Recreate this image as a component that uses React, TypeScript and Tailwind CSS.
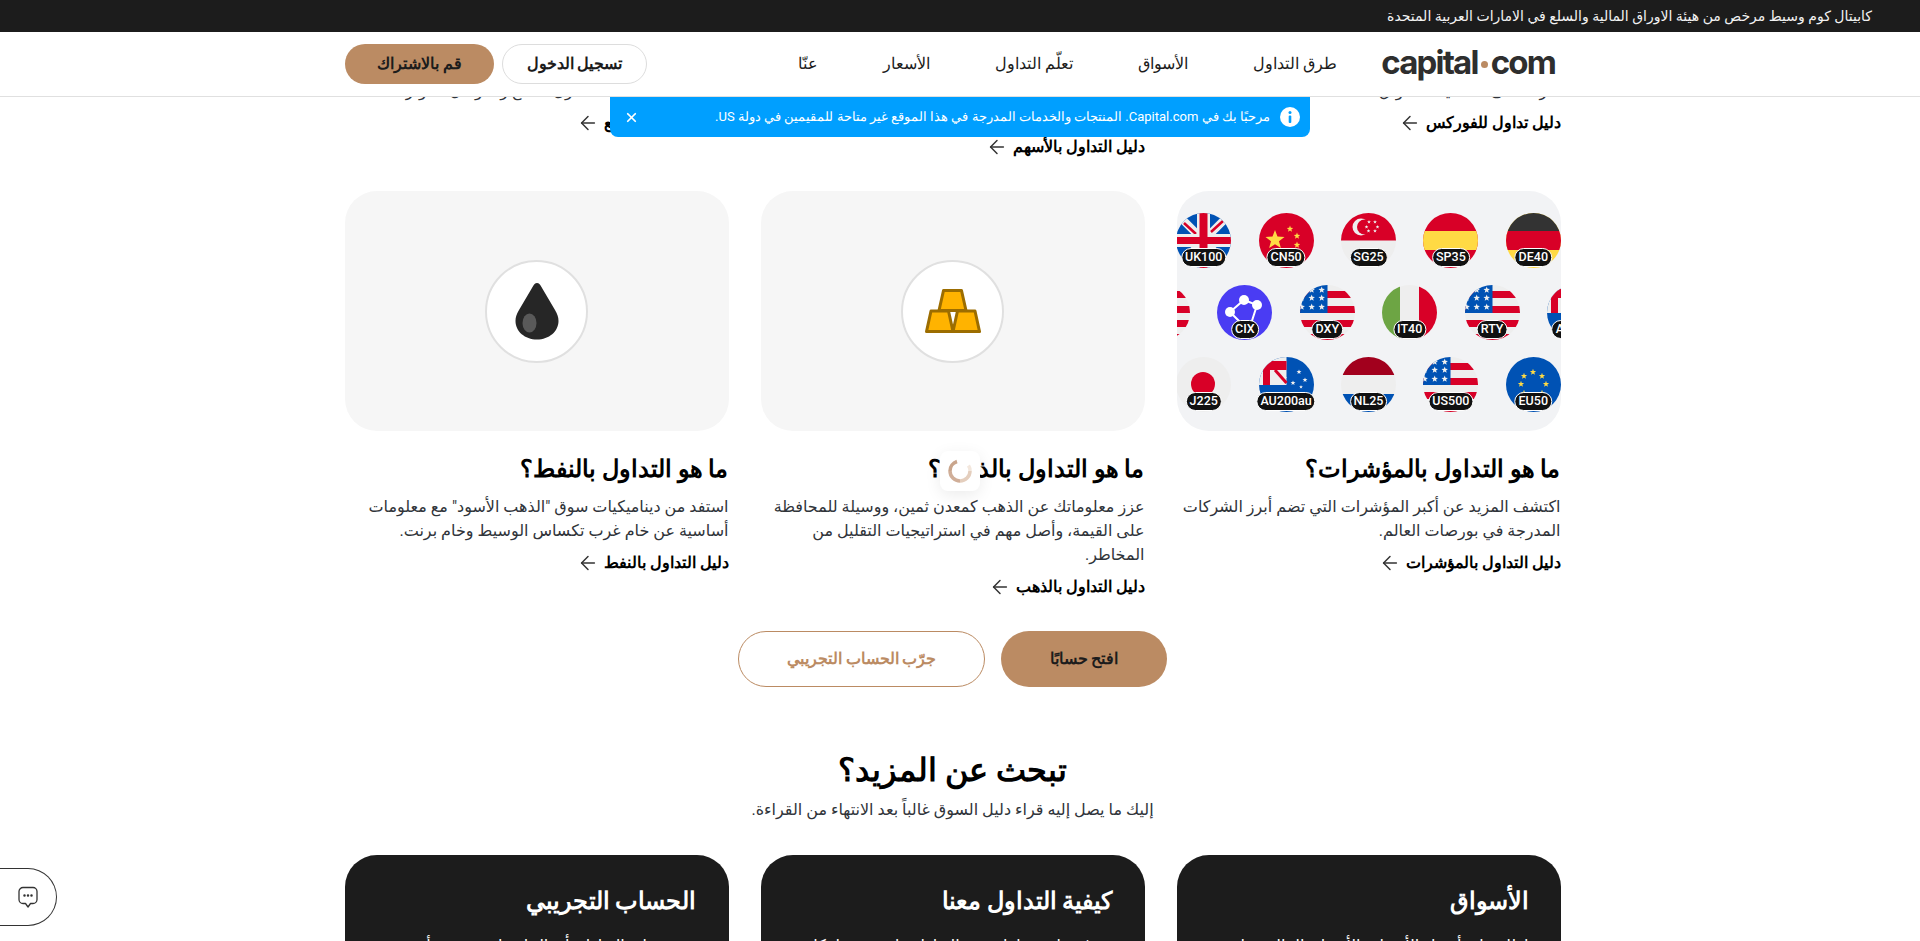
import type { ReactNode, JSX } from "react";
import { ArrowLeft, X } from "lucide-react";

const R = "#d80027", B = "#0052b4", Y = "#ffda44", G = "#eeeeee";

function starPoints(cx: number, cy: number, r: number) {
  const pts: string[] = [];
  for (let i = 0; i < 10; i++) {
    const rad = i % 2 === 0 ? r : r * 0.42;
    const a = -Math.PI / 2 + (i * Math.PI) / 5;
    pts.push(`${(cx + rad * Math.cos(a)).toFixed(2)},${(cy + rad * Math.sin(a)).toFixed(2)}`);
  }
  return pts.join(" ");
}
const Star = ({ x, y, r, fill = "#eee" }: { x: number; y: number; r: number; fill?: string }) => (
  <polygon points={starPoints(x, y, r)} fill={fill} />
);

const USA = () => (
  <>
    <rect width="55" height="55" fill={G} />
    <rect y="6" width="55" height="7" fill={R} />
    <rect y="21" width="55" height="7" fill={R} />
    <rect y="35" width="55" height="7" fill={R} />
    <rect y="49" width="55" height="6" fill={R} />
    <rect width="27.5" height="28" fill={B} />
    {[[21.7, 5], [11.7, 5], [11.7, 13], [21.7, 13], [1.7, 13], [1.7, 22], [11.7, 22], [21.7, 22]].map(([x, y]) => (
      <Star key={`${x}-${y}`} x={x} y={y} r={3.4} />
    ))}
  </>
);

const AUS = () => (
  <>
    <rect width="55" height="55" fill={B} />
    <rect width="27.5" height="28" fill={G} />
    <path d="M4 4h23.5v9H11v15H4Z" fill={R} />
    <path d="M16 13 L27.5 26" stroke={R} strokeWidth="3" />
    <path d="M20 13 L27.5 21" stroke={G} strokeWidth="1" />
    <Star x={40} y={15} r={2.6} />
    <Star x={34} y={26} r={2.6} />
    <Star x={46} y={23} r={2.6} />
    <Star x={42} y={30} r={2} />
  </>
);

const FLAGS: Record<string, JSX.Element> = {
  UK: (
    <>
      <rect width="55" height="55" fill={B} />
      <path d="M0 0 L55 55 M55 0 L0 55" stroke={G} strokeWidth="8" />
      <path d="M8 10 L20 21 M35 19 L47 8" stroke={R} strokeWidth="2.5" />
      <rect x="21" width="13" height="55" fill={G} />
      <rect y="21" width="55" height="13" fill={G} />
      <rect x="23.5" width="8" height="55" fill={R} />
      <rect y="24" width="55" height="7" fill={R} />
    </>
  ),
  CN: (
    <>
      <rect width="55" height="55" fill={R} />
      <Star x={16} y={27} r={10} fill={Y} />
      <Star x={31} y={16} r={3.4} fill={Y} />
      <Star x={38} y={23} r={3.4} fill={Y} />
      <Star x={38} y={32} r={3.4} fill={Y} />
      <Star x={31} y={40} r={3.4} fill={Y} />
    </>
  ),
  SG: (
    <>
      <rect width="55" height="55" fill={G} />
      <rect width="55" height="27.5" fill={R} />
      <circle cx="20" cy="14" r="8.5" fill={G} />
      <circle cx="23.5" cy="14" r="7.5" fill={R} />
      <Star x={28} y={9} r={2} />
      <Star x={34} y={9} r={2} />
      <Star x={25.5} y={14} r={2} />
      <Star x={36.5} y={14} r={2} />
      <Star x={27.5} y={18} r={2} />
      <Star x={34} y={18} r={2} />
    </>
  ),
  ES: (
    <>
      <rect width="55" height="55" fill={R} />
      <rect y="18" width="55" height="19" fill={Y} />
    </>
  ),
  DE: (
    <>
      <rect width="55" height="55" fill={Y} />
      <rect width="55" height="18" fill="#333333" />
      <rect y="18" width="55" height="19" fill={R} />
    </>
  ),
  CIX: (
    <>
      <rect width="55" height="55" fill="#4a3cf3" />
      <path d="M13 27 L27 15 L40 20 L33 42 M13 27 L26 40" stroke="#fff" strokeWidth="2" fill="none" />
      <circle cx="13" cy="27" r="5" fill="#fff" />
      <circle cx="27" cy="15" r="5" fill="#fff" />
      <circle cx="40" cy="20" r="5" fill="#fff" />
    </>
  ),
  IT: (
    <>
      <rect width="55" height="55" fill={G} />
      <rect width="18" height="55" fill="#6da544" />
      <rect x="37" width="18" height="55" fill={R} />
    </>
  ),
  US: <USA />,
  AU: <AUS />,
  JP: (
    <>
      <rect width="55" height="55" fill={G} />
      <circle cx="27" cy="27" r="12" fill={R} />
    </>
  ),
  NL: (
    <>
      <rect width="55" height="55" fill={G} />
      <rect width="55" height="18" fill="#a2001d" />
      <rect y="37" width="55" height="18" fill={B} />
    </>
  ),
  EU: (
    <>
      <rect width="55" height="55" fill={B} />
      {[[27, 15], [18, 19], [36, 19], [15, 27], [40, 27], [18, 36], [36, 36], [27, 40]].map(([x, y]) => (
        <Star key={`${x}-${y}`} x={x} y={y} r={3.3} fill={Y} />
      ))}
    </>
  ),
};

function Flag({ flag, label }: { flag: string; label?: string }) {
  return (
    <div className="relative h-[55px] w-[55px] shrink-0">
      <svg viewBox="0 0 55 55" className="h-[55px] w-[55px] rounded-full">
        {FLAGS[flag]}
      </svg>
      {label && (
        <span className="absolute bottom-px left-1/2 flex h-[19px] -translate-x-1/2 items-center rounded-full border border-white bg-[#111111] px-[3px] font-['Roboto',sans-serif] text-[12.5px] font-medium text-white">
          {label}
        </span>
      )}
    </div>
  );
}

function IndicesArt() {
  const rows = [
    [["UK", "UK100"], ["CN", "CN50"], ["SG", "SG25"], ["ES", "SP35"], ["DE", "DE40"]],
    [["US", ""], ["CIX", "CIX"], ["US", "DXY"], ["IT", "IT40"], ["US", "RTY"], ["AU", "AU200"]],
    [["JP", "J225"], ["AU", "AU200au"], ["NL", "NL25"], ["US", "US500"], ["EU", "EU50"]],
  ];
  return (
    <div dir="ltr" className="flex h-[240px] flex-col gap-[17px] overflow-hidden rounded-[32px] bg-[#f2f3f5] pt-[22px]">
      {rows.map((row, i) => (
        <div key={i} className="flex justify-center gap-[27.4px]">
          {row.map(([f, l], j) => (
            <Flag key={j} flag={f} label={l} />
          ))}
        </div>
      ))}
    </div>
  );
}

function IconArt({ children }: { children: ReactNode }) {
  return (
    <div className="flex h-[240px] items-center justify-center rounded-[32px] bg-[#f6f6f6]">
      <div className="flex h-[103px] w-[103px] items-center justify-center rounded-full border-2 border-[#e0e0e0] bg-white">
        {children}
      </div>
    </div>
  );
}

const BODY = "font-['Roboto','DejaVu_Sans',sans-serif] text-[16px] leading-6 text-[#30343a]";

function GuideLink({ children }: { children: ReactNode }) {
  return (
    <a className="mt-2 flex h-6 items-center gap-[5px] text-[16px] font-bold leading-6 text-black">
      <span>{children}</span>
      <ArrowLeft size={22} strokeWidth={1.6} className="text-[#333333]" />
    </a>
  );
}

function Column({ art, title, text, link }: { art: ReactNode; title: string; text: string; link: string }) {
  return (
    <div>
      {art}
      <h3 className="mt-[22px] text-[24px] font-bold leading-8 text-black">{title}</h3>
      <p className={`mt-[10px] ${BODY}`}>{text}</p>
      <GuideLink>{link}</GuideLink>
    </div>
  );
}

function DarkCard({ title, text }: { title: string; text: string }) {
  return (
    <div className="h-[300px] rounded-[32px] bg-[#1c1c1c] px-8 pt-[28px] text-white">
      <h3 className="text-[24px] font-bold leading-9">{title}</h3>
      <p className="mt-[15px] font-['Roboto','DejaVu_Sans',sans-serif] text-[16px] leading-6">{text}</p>
    </div>
  );
}

export default function App() {
  return (
    <div dir="rtl" className="relative flex h-[941px] flex-col overflow-hidden bg-white font-['Roboto',sans-serif] text-[#1c1c1c]">
      <div className="flex h-8 shrink-0 items-center bg-[#1c1c1c] pr-12 font-['Roboto','DejaVu_Sans',sans-serif] text-[14px] text-[#f2f2f2]">
        كابيتال كوم وسيط مرخص من هيئة الاوراق المالية والسلع في الامارات العربية المتحدة
      </div>

      <header className="z-10 flex h-[65px] shrink-0 items-center justify-between border-b border-[#e0e0e0] bg-white pl-[345px] pr-[365px]">
        <div className="flex items-center gap-[44px]">
          <div dir="ltr" className="flex items-center pb-[3px] font-['Inter',sans-serif] text-[33px] font-bold leading-none tracking-[-1.8px] text-[#2e2e2e]">
            capital<span className="mx-[3px] mt-[3px] h-[7px] w-[7px] rounded-full bg-[#bb8b63]" />com
          </div>
          <nav className="flex items-center gap-[65px] text-[16px] text-[#1c1c1c]">
            <a>طرق التداول</a>
            <a>الأسواق</a>
            <a>تعلّم التداول</a>
            <a>الأسعار</a>
            <a>عنّا</a>
          </nav>
        </div>
        <div className="flex items-center gap-2 text-[16px] font-bold">
          <a className="flex h-10 w-[145px] items-center justify-center rounded-full border border-[#dddddd]">تسجيل الدخول</a>
          <a className="flex h-10 w-[149px] items-center justify-center rounded-full bg-[#bb8b63]">قم بالاشتراك</a>
        </div>
      </header>

      <main className="flex flex-1 flex-col overflow-hidden pr-[15px]">
        <div className="mx-auto w-[1216px] shrink-0 -mt-[18px]">
          <div className="grid grid-cols-3 items-start gap-8">
            <div>
              <p className={BODY}>تعرّف على أساسيات أسواق العملات</p>
              <GuideLink>دليل تداول للفوركس</GuideLink>
            </div>
            <div>
              <p className={BODY}>اكتشف أساسيات الاستثمار في الأسهم والشركات العالمية</p>
              <p className={BODY}>تعلم كيف تبدأ.</p>
              <GuideLink>دليل التداول بالأسهم</GuideLink>
            </div>
            <div>
              <p className={BODY}>تعرّف على أساسيات تداول السلع والعوامل المؤثرة</p>
              <GuideLink>دليل التداول بالسلع</GuideLink>
            </div>
          </div>

          <div className="mt-8 grid grid-cols-3 items-start gap-8">
            <Column
              art={<IndicesArt />}
              title="ما هو التداول بالمؤشرات؟"
              text="اكتشف المزيد عن أكبر المؤشرات التي تضم أبرز الشركات المدرجة في بورصات العالم."
              link="دليل التداول بالمؤشرات"
            />
            <Column
              art={
                <IconArt>
                  <svg width="56" height="44" viewBox="0 0 56 44" fill="#ffb300" stroke="#9c6d00" strokeWidth="3" strokeLinejoin="round">
                    <path d="M18.500 1.500h18l4.500 20H14Z" />
                    <path d="M6 22h17.500L28 42.500H1.500Z" />
                    <path d="M32.500 22H50l4.500 20.500H28Z" />
                  </svg>
                </IconArt>
              }
              title="ما هو التداول بالذهب؟"
              text="عزز معلوماتك عن الذهب كمعدن ثمين، ووسيلة للمحافظة على القيمة، وأصل مهم في استراتيجيات التقليل من المخاطر."
              link="دليل التداول بالذهب"
            />
            <Column
              art={
                <IconArt>
                  <svg width="44" height="57" viewBox="0 0 44 57">
                    <path d="M22 0c2 0 3 1.500 4 3.200L40 27c2.500 4 3.500 7.500 3.500 11C43.500 48.500 34 56.500 22 56.500S.5 48.500.5 38c0-3.500 1-7 3.500-11L18 3.200C19 1.500 20 0 22 0Z" fill="#262626" />
                    <ellipse cx="14.500" cy="40" rx="7" ry="9.500" fill="#595959" />
                  </svg>
                </IconArt>
              }
              title="ما هو التداول بالنفط؟"
              text='استفد من ديناميكيات سوق "الذهب الأسود" مع معلومات أساسية عن خام غرب تكساس الوسيط وخام برنت.'
              link="دليل التداول بالنفط"
            />
          </div>

          <div className="mt-8 flex justify-center gap-4 text-[16px] font-bold">
            <a className="flex h-14 w-[166px] items-center justify-center rounded-full bg-[#bb8b63]">افتح حسابًا</a>
            <a className="flex h-14 w-[247px] items-center justify-center rounded-full border border-[#bb8b63] text-[#bb8b63]">جرّب الحساب التجريبي</a>
          </div>

          <h2 className="mt-[60px] text-center text-[32px] font-bold leading-[46px] text-black">تبحث عن المزيد؟</h2>
          <p className={`mt-[5px] text-center ${BODY}`}>إليك ما يصل إليه قراء دليل السوق غالباً بعد الانتهاء من القراءة.</p>

          <div className="mt-[33px] grid grid-cols-3 gap-8">
            <DarkCard title="الأسواق" text="اطلع على أسعار الأصول والأسواق المالية مباشرة وآخر التطورات." />
            <DarkCard title="كيفية التداول معنا" text="تعرف على خطوات بدء التداول على منصتنا بكل سهولة." />
            <DarkCard title="الحساب التجريبي" text="تدرب على التداول بأموال افتراضية بدون أي مخاطرة." />
          </div>
        </div>
      </main>

      <div className="absolute left-1/2 top-[97px] z-20 flex h-10 w-[700px] -translate-x-1/2 items-center gap-[10px] rounded-b-lg bg-[#009fff] pl-[14px] pr-[10px] text-[13px] text-white">
        <svg width="20" height="20" viewBox="0 0 20 20" className="shrink-0">
          <circle cx="10" cy="10" r="10" fill="#fff" />
          <circle cx="10" cy="5.500" r="1.500" fill="#009fff" />
          <rect x="8.700" y="8.500" width="2.600" height="7.500" rx="1" fill="#009fff" />
        </svg>
        <span className="flex-1">مرحبًا بك في Capital.com. المنتجات والخدمات المدرجة في هذا الموقع غير متاحة للمقيمين في دولة US.</span>
        <X size={15} strokeWidth={2.8} />
      </div>

      <div className="absolute left-[940px] top-[451px] z-20 flex h-10 w-10 items-center justify-center rounded-lg bg-white shadow-[0_4px_16px_rgba(0,0,0,0.08)]">
        <svg width="24" height="24" viewBox="0 0 24 24" fill="none" strokeWidth="3.500">
          <path d="M2 12 A10 10 0 0 1 9 2.500" stroke="#c9a58c" />
          <path d="M12 22 A10 10 0 0 1 2 12" stroke="#d0ae98" />
          <path d="M22 12 A10 10 0 0 1 12 22" stroke="#e4cebd" />
          <path d="M20.500 6.500 A10 10 0 0 1 22 12" stroke="#f3e7dd" />
        </svg>
      </div>

      <div className="absolute left-0 top-[868px] z-20 flex h-[58px] w-[57px] items-center justify-center rounded-r-full border border-l-0 border-[#333333] bg-white">
        <svg width="24" height="24" viewBox="0 0 24 24" fill="none" stroke="#333333" strokeWidth="1.300" strokeLinejoin="round">
          <path d="M7 2.500h10a4 4 0 0 1 4 4v8a4 4 0 0 1-4 4h-2.500L12 22l-2.500-3.500H7a4 4 0 0 1-4-4v-8a4 4 0 0 1 4-4Z" />
          <circle cx="8.500" cy="10.500" r=".6" fill="#333333" />
          <circle cx="12" cy="10.500" r=".6" fill="#333333" />
          <circle cx="15.500" cy="10.500" r=".6" fill="#333333" />
        </svg>
      </div>
    </div>
  );
}
